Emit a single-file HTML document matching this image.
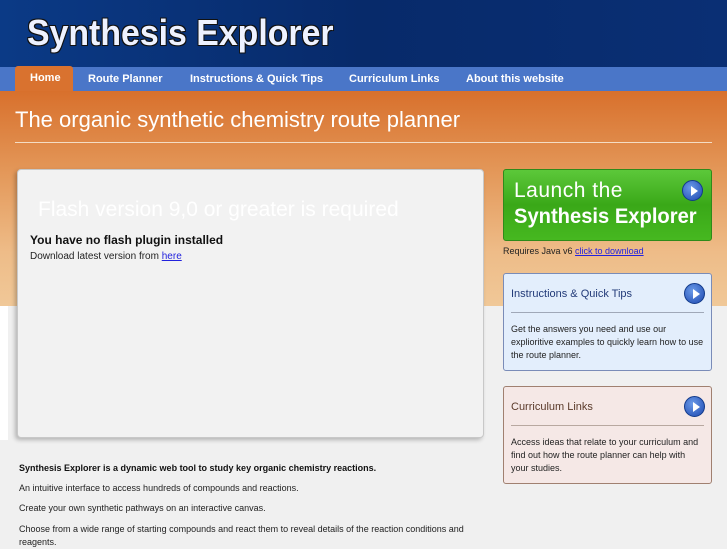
<!DOCTYPE html>
<html><head><style>
*{margin:0;padding:0;box-sizing:border-box}
body{width:727px;height:545px;overflow:hidden;font-family:"Liberation Sans",sans-serif;background:#f0f0f0;position:relative}
.hdr{position:absolute;left:0;top:0;width:727px;height:67px;background:linear-gradient(90deg,#0b3a86,#072a6a 50%,#0a2f74)}
.logo{position:absolute;left:27px;top:12px;font-size:36px;font-weight:bold;color:#eef2ff;transform:scaleX(0.94);transform-origin:0 0;white-space:nowrap;text-shadow:-1px -1px 0 #111,1px 1px 0 #111,1px -1px 0 #111,-1px 1px 0 #111}
.nav{position:absolute;left:0;top:67px;width:727px;height:24px;background:#4a76c8}
.nav span{position:absolute;top:6px;font-size:11px;font-weight:bold;color:#fff}
.home{position:absolute;left:15px;top:66px;width:58px;height:26px;background:#d9722f;border-radius:3px 3px 0 0}
.org{position:absolute;left:0;top:91px;width:727px;height:215px;background:linear-gradient(180deg,#d8702c 0%,#e49a5c 40%,#eebc88 75%,#f0c898 100%)}
h1{position:absolute;left:15px;top:107px;font-size:22px;font-weight:normal;color:#fff;white-space:nowrap}
.rule{position:absolute;left:15px;top:142px;width:697px;height:1px;background:#f4dcc4}
.flash{position:absolute;left:17px;top:169px;width:467px;height:269px;background:#f2f2f2;border:1px solid #c8c8c8;border-radius:4px;box-shadow:-2px 2px 4px rgba(0,0,0,.25)}
.ft{position:absolute;left:20px;top:28px;font-size:21px;color:#fff}
.launch{position:absolute;left:503px;top:169px;width:209px;height:72px;background:linear-gradient(180deg,#5cc83a,#3aa818 50%,#46b820);border:1px solid #2f8a1a;border-radius:3px;color:#fff}
.play{position:absolute;width:21px;height:21px;border-radius:50%;background:radial-gradient(circle at 40% 35%,#6a9ae8,#1d48b0);border:1px solid #123a8a}
.play:after{content:"";position:absolute;left:8px;top:5px;border-left:7px solid #fff;border-top:5px solid transparent;border-bottom:5px solid transparent}
.box{position:absolute;left:503px;width:209px;height:98px;border-radius:3px}
.box .t{position:absolute;left:7px;top:14px;font-size:11px}
.box .l{position:absolute;left:7px;right:7px;top:38px;height:1px;background:#a0a8b8}
.box .d{position:absolute;left:7px;top:49px;right:6px;font-size:9px;line-height:13px;color:#222}
.bot{position:absolute;left:19px;font-size:9px;color:#222}
a{color:#2222dd}
</style></head><body>
<div class="hdr"><div class="logo">Synthesis Explorer</div></div>
<div class="nav">
<span style="left:88px">Route Planner</span>
<span style="left:190px">Instructions &amp; Quick Tips</span>
<span style="left:349px">Curriculum Links</span>
<span style="left:466px">About this website</span>
</div>
<div class="home"><span style="position:absolute;left:15px;top:6px;font-size:11px;font-weight:bold;color:#fff">Home</span></div>
<div class="org"></div>
<div style="position:absolute;left:0;top:306px;width:8px;height:134px;background:#fff"></div>
<h1>The organic synthetic chemistry route planner</h1>
<div class="rule"></div>
<div class="flash">
<div class="ft">Flash version 9,0 or greater is required</div>
<div style="position:absolute;left:12px;top:63px;font-size:12px;font-weight:bold;color:#111">You have no flash plugin installed</div>
<div style="position:absolute;left:12px;top:81px;font-size:10px;color:#222">Download latest version from <a href="#">here</a></div>
</div>
<div class="launch">
<div style="position:absolute;left:10px;top:9px;font-size:21px;font-weight:normal;letter-spacing:0.5px">Launch the</div>
<div style="position:absolute;left:10px;top:35px;font-size:21px;font-weight:bold;transform:scaleX(0.96);transform-origin:0 0;white-space:nowrap">Synthesis Explorer</div>
<div class="play" style="left:178px;top:10px"></div>
</div>
<div style="position:absolute;left:503px;top:246px;font-size:9px;color:#222">Requires Java v6 <a href="#">click to download</a></div>
<div class="box" style="top:273px;background:#e3eefc;border:1px solid #7a8cb8">
<div class="t" style="color:#223a78">Instructions &amp; Quick Tips</div>
<div class="play" style="left:180px;top:9px"></div>
<div class="l"></div>
<div class="d">Get the answers you need and use our explioritive examples to quickly learn how to use the route planner.</div>
</div>
<div class="box" style="top:386px;background:#f5e8e6;border:1px solid #a08070">
<div class="t" style="color:#5a3a2a">Curriculum Links</div>
<div class="play" style="left:180px;top:9px"></div>
<div class="l" style="background:#b8a8a0"></div>
<div class="d">Access ideas that relate to your curriculum and find out how the route planner can help with your studies.</div>
</div>
<div class="bot" style="top:463px;font-weight:bold;color:#111">Synthesis Explorer is a dynamic web tool to study key organic chemistry reactions.</div>
<div class="bot" style="top:483px">An intuitive interface to access hundreds of compounds and reactions.</div>
<div class="bot" style="top:503px">Create your own synthetic pathways on an interactive canvas.</div>
<div class="bot" style="top:523px;width:460px;line-height:13px">Choose from a wide range of starting compounds and react them to reveal details of the reaction conditions and reagents.</div>
</body></html>
